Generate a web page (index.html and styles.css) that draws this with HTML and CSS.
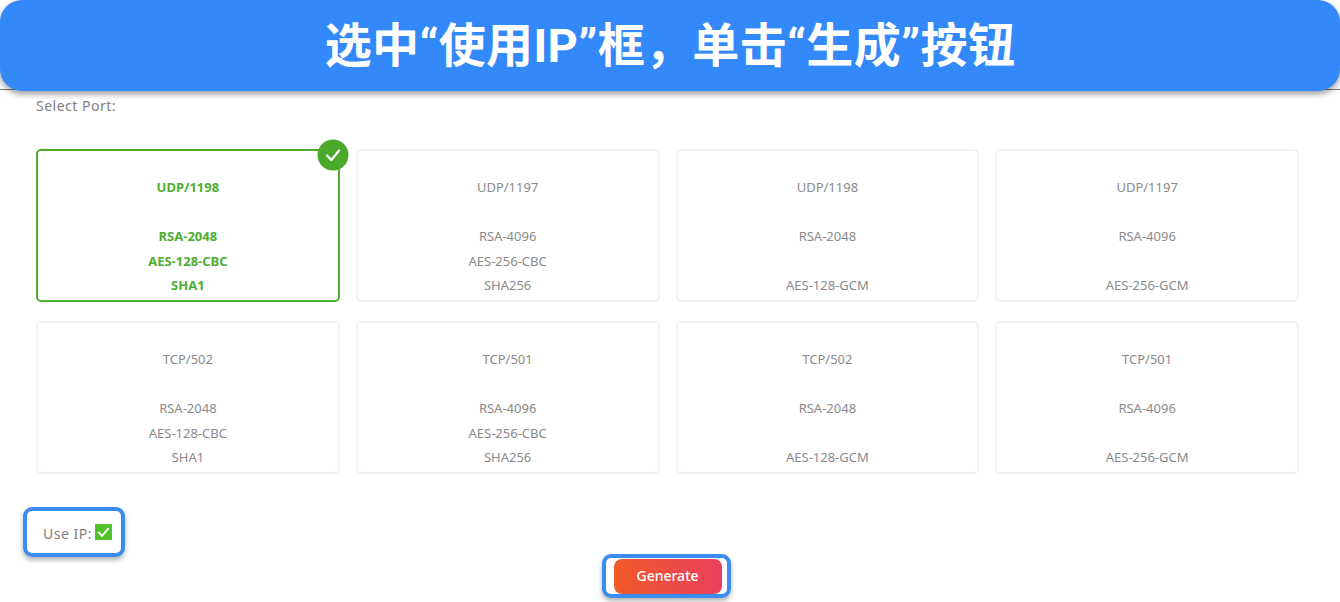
FILE: index.html
```html
<!DOCTYPE html>
<html lang="zh">
<head>
<meta charset="utf-8">
<title>选中“使用IP”框</title>
<link rel="stylesheet" href="styles.css">
</head>
<body>
<div class="banner">选中“使用IP”框，单击“生成”按钮</div>
<header class="topline"></header>
<main class="page">
  <div class="select-label">Select Port:</div>
  <section class="grid">
    <div class="card selected">
      <span class="tick"><svg width="32" height="32" viewBox="0 0 32 32"><circle cx="16" cy="16" r="15.5" fill="#4aa82a"/><path d="M10 16.5l4.3 4.5 7.8-9.5" fill="none" stroke="#fff" stroke-width="2.2" stroke-linecap="round" stroke-linejoin="round"/></svg></span>
      <div class="line">UDP/1198</div><div class="line"></div><div class="line">RSA-2048</div><div class="line">AES-128-CBC</div><div class="line">SHA1</div>
    </div>
    <div class="card">
      <div class="line">UDP/1197</div><div class="line"></div><div class="line">RSA-4096</div><div class="line">AES-256-CBC</div><div class="line">SHA256</div>
    </div>
    <div class="card">
      <div class="line">UDP/1198</div><div class="line"></div><div class="line">RSA-2048</div><div class="line"></div><div class="line">AES-128-GCM</div>
    </div>
    <div class="card">
      <div class="line">UDP/1197</div><div class="line"></div><div class="line">RSA-4096</div><div class="line"></div><div class="line">AES-256-GCM</div>
    </div>
    <div class="card">
      <div class="line">TCP/502</div><div class="line"></div><div class="line">RSA-2048</div><div class="line">AES-128-CBC</div><div class="line">SHA1</div>
    </div>
    <div class="card">
      <div class="line">TCP/501</div><div class="line"></div><div class="line">RSA-4096</div><div class="line">AES-256-CBC</div><div class="line">SHA256</div>
    </div>
    <div class="card">
      <div class="line">TCP/502</div><div class="line"></div><div class="line">RSA-2048</div><div class="line"></div><div class="line">AES-128-GCM</div>
    </div>
    <div class="card">
      <div class="line">TCP/501</div><div class="line"></div><div class="line">RSA-4096</div><div class="line"></div><div class="line">AES-256-GCM</div>
    </div>
  </section>
  <div class="use-ip">
    <span class="use-label">Use IP:</span>
    <svg class="checkbox" width="17" height="16" viewBox="0 0 18 17"><rect width="18" height="17" fill="#52c22b"/><path d="M3.5 8.5l4 4L14.5 4.5" fill="none" stroke="#fff" stroke-width="2"/></svg>
    <span class="highlight"></span>
  </div>
  <div class="actions">
    <div class="generate-wrap">
      <button class="generate">Generate</button>
      <span class="highlight"></span>
    </div>
  </div>
</main>
</body>
</html>
```
FILE: styles.css
```css
* { box-sizing: border-box; }
html, body { margin: 0; height: 602px; overflow: hidden; background: #fff; }
body { font-family: "Noto Sans", "Noto Sans CJK SC", sans-serif; color: #8a8a8a; position: relative; }
.banner {
  position: absolute; left: 0; top: 0; width: 1340px; height: 91px;
  background: #3388fa; border-radius: 22px; color: #fff;
  font: 700 47px/91px Roboto, "Noto Sans CJK SC", sans-serif; letter-spacing: .35px;
  text-align: center; box-shadow: 0 3px 6px rgba(0,0,0,.4); z-index: 2;
}
.topline { height: 90px; border-bottom: 1px solid #777; }
.page { padding: 0 41px 0 36px; }
.select-label { font-size: 14px; line-height: 20px; margin-top: 6px; letter-spacing: .5px; color: #808080; }
.grid { display: grid; grid-template-columns: repeat(4, 1fr); gap: 19px 16px; margin-top: 33px; }
.card {
  position: relative; height: 153px; padding-top: 24px; border: 2px solid #f2f2f2; border-radius: 5px;
  text-align: center; font-size: 13px;
}
.line { height: 24.5px; line-height: 24.5px; }
.card.selected { border-color: #4fae32; color: #4fae32; font-weight: 700; }
.tick { position: absolute; right: -11px; top: -12px; width: 32px; height: 32px; }
.tick svg { display: block; }
.use-ip {
  position: relative; display: flex; align-items: center; gap: 4px;
  width: max-content; margin: 47px 0 0 7px; height: 24px; font-size: 14px;
}
.use-label { letter-spacing: .5px; color: #808080; }
.checkbox { display: block; margin-top: -2px; margin-left: -1px; }
.highlight {
  position: absolute; border: 4px solid #3a8cf0; border-radius: 9px;
  box-shadow: 0 3px 5px rgba(0,0,0,.3);
}
.use-ip .highlight { left: -20px; right: -13px; top: -14px; bottom: -12px; }
.actions { display: flex; justify-content: center; margin-top: 14px; }
.generate-wrap { position: relative; }
.generate {
  display: block; width: 108px; height: 35px; border: 0; border-radius: 8px; padding: 0 0 2px;
  background: linear-gradient(90deg, #f05a28, #ea3f5e); color: #fff;
  font: 500 14px "Noto Sans", sans-serif;
}
.generate-wrap .highlight { left: -12px; right: -9px; top: -5px; bottom: -4px; }
```
